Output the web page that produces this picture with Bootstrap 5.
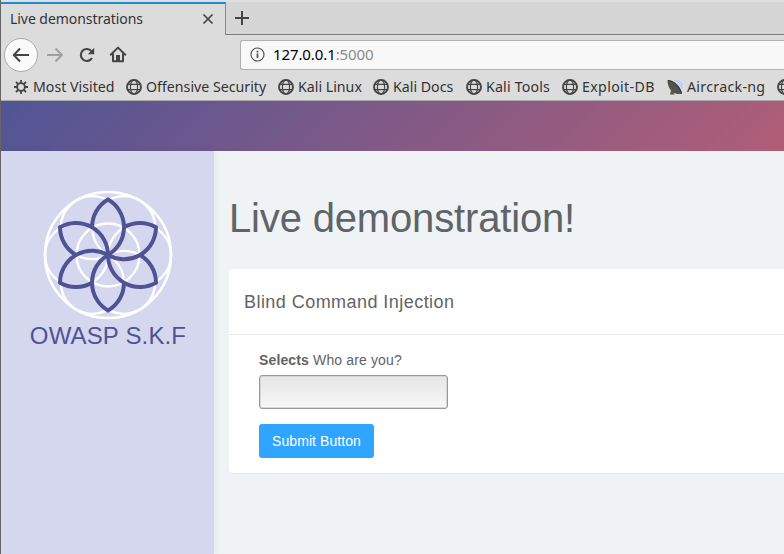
<!DOCTYPE html>
<html lang="en">
<head>
<meta charset="utf-8">
<meta name="viewport" content="width=device-width, initial-scale=1">
<title>Live demonstrations</title>
<link href="https://cdn.jsdelivr.net/npm/bootstrap@5.3.0/dist/css/bootstrap.min.css" rel="stylesheet">
<style>
body{width:784px;height:554px;overflow:hidden;background:#eff3f6;font-family:"Liberation Sans",Arial,sans-serif;color:#616466;font-size:14px;border-left:1px solid #666}
.chrome{height:101px;background:#dcdcdc;border-bottom:1px solid #aaa;font-family:"Noto Sans","Open Sans",sans-serif;color:#333;font-size:14px}
.tabs{height:35px;background:#d6d6d6;border-top:2px solid #e0e0e0}
.tab-on{width:225px;background:#dcdcdc;border-top:2px solid #1c8bcb;border-right:1px solid #888;padding:0 11px 0 9px}
.tab-on span{letter-spacing:-.05px;margin-top:-2px}
.tab-on svg{margin-top:-2px}
.tab-rest{border-bottom:1px solid #7c7c7c;padding-left:8px}
.toolbar{height:39px;padding-left:3px}
.back{width:34px;height:34px;background:#fafafa;border:1px solid #aaa}
.fwd{margin-left:8px}
.tool{margin-left:13.5px}
.address{height:30px;margin-left:113px;background:#f8f8f8;border:1px solid #b0b0b0;border-right:0;border-radius:3px 0 0 3px;padding-left:9px;color:#000;font-size:15px;letter-spacing:-.1px}
.address .port{color:#8a8a8a}
.marks{height:26px;padding-left:12px;font-size:14.2px;line-height:26px}
.mk{height:26px;gap:4px}
.mk span{white-space:nowrap}
.wide{letter-spacing:.3px}
.wider{letter-spacing:.35px}
.page-top{height:50px;background:linear-gradient(135deg,#505596 0,#b15e76 590px,#c85f6b 700px)}
.side{width:213px;height:403px;background:#d5d7ee;padding-top:39px;color:#4f5396;box-shadow:1px 0 8px rgba(0,0,0,.06)}
.brand{font-size:24px;line-height:32px;letter-spacing:.15px;padding-left:1px}
.main{padding:43px 0 0 15px;min-width:0}
.main h1{font-size:40px;line-height:48px;margin-bottom:27px;font-weight:400;letter-spacing:-.16px}
.panel{height:205px;background:#fff;border-bottom:1px solid #e3e6e8;border-radius:4px 0 0 4px}
.panel-title{height:66px;padding:2px 0 0 15px;border-bottom:1px solid #e8ebed;font-size:18px;letter-spacing:.45px}
.panel-form{padding:15px 30px}
.panel-form label{line-height:20px;margin-bottom:5px;letter-spacing:.14px}
.answer{width:189px;height:34px;border:1px solid #999;border-radius:3px;background:linear-gradient(#e6e6e6,#f7f7f7);box-shadow:inset 0 0 0 1px #d5d5d5;margin-bottom:15px}
.send{width:115px;height:34px;background:#30a5ff;border:0;border-radius:3px;color:#fff;font-size:14px;padding:0;letter-spacing:.08px}
</style>
<script src="https://cdn.jsdelivr.net/npm/bootstrap@5.3.0/dist/js/bootstrap.bundle.min.js"></script>
</head>
<body>
<svg width="0" height="0" class="position-absolute" aria-hidden="true">
<symbol id="globe" viewBox="0 0 16 16"><g fill="none" stroke="#444"><circle cx="8" cy="8" r="7" stroke-width="1.9"/><ellipse cx="8" cy="8" rx="3.6" ry="7" stroke-width="1.2"/><path d="M2 5.3h12M2 10.7h12" stroke-width="1.3"/></g></symbol>
</svg>
<header class="chrome">
<div class="tabs d-flex">
<div class="tab-on d-flex align-items-center justify-content-between flex-shrink-0"><span>Live demonstrations</span>
<svg width="12" height="12" viewBox="0 0 12 12"><path d="M1.500 1.500l9 9M10.500 1.500l-9 9" stroke="#444" stroke-width="1.700"/></svg></div>
<div class="tab-rest flex-grow-1"><svg width="16" height="16" viewBox="0 0 16 16" class="mt-2"><path d="M8 1v14M1 8h14" stroke="#444" stroke-width="2"/></svg></div>
</div>
<div class="toolbar d-flex align-items-center">
<span class="back rounded-circle d-flex align-items-center justify-content-center flex-shrink-0"><svg width="18" height="16" viewBox="0 0 18 16"><path d="M17 8H2M8 1.500L1.800 8 8 14.500" fill="none" stroke="#444" stroke-width="2"/></svg></span>
<svg class="flex-shrink-0 fwd" width="18" height="16" viewBox="0 0 18 16"><path d="M1 8h14.500M9.500 1.500L15.800 8l-6.300 6.500" fill="none" stroke="#a0a0a0" stroke-width="2"/></svg>
<svg class="flex-shrink-0 tool" width="18" height="16" viewBox="0 0 18 16"><path d="M13.500 4.200A6 6 0 1 0 14 11" fill="none" stroke="#444" stroke-width="2.100"/><path d="M16.200 .8v6.400H9.800z" fill="#444"/></svg>
<svg class="flex-shrink-0 tool" width="18" height="17" viewBox="0 0 18 17"><path d="M1.200 9.200L9 1.600l7.800 7.600M4 7.500v7.800h10V7.500" fill="none" stroke="#444" stroke-width="2" stroke-linejoin="round"/><path d="M7 9h4v6H7z" fill="#444"/></svg>
<div class="address d-flex align-items-center flex-grow-1"><svg width="15" height="15" viewBox="0 0 15 15" class="me-2"><circle cx="7.500" cy="7.500" r="6.500" fill="none" stroke="#555" stroke-width="1.200"/><path d="M7.500 6.500v4.500M7.500 3.700v1.700" stroke="#555" stroke-width="1.800"/></svg><span>127.0.0.1<span class="port">:5000</span></span></div>
</div>
<nav class="marks d-flex overflow-hidden">
<div class="mk d-flex align-items-center flex-shrink-0" style="width:113px"><svg width="16" height="16" viewBox="0 0 16 16"><circle cx="8" cy="8" r="3.900" fill="none" stroke="#444" stroke-width="1.900"/><path d="M8 1v3M8 12v3M1 8h3M12 8h3M3 3l2.200 2.200M10.800 10.800L13 13M13 3l-2.200 2.200M5.200 10.800L3 13" stroke="#444" stroke-width="1.800"/></svg><span>Most Visited</span></div>
<div class="mk d-flex align-items-center flex-shrink-0" style="width:152px"><svg width="16" height="16"><use href="#globe"/></svg><span>Offensive Security</span></div>
<div class="mk d-flex align-items-center flex-shrink-0" style="width:95px"><svg width="16" height="16"><use href="#globe"/></svg><span>Kali Linux</span></div>
<div class="mk d-flex align-items-center flex-shrink-0" style="width:93px"><svg width="16" height="16"><use href="#globe"/></svg><span>Kali Docs</span></div>
<div class="mk d-flex align-items-center flex-shrink-0" style="width:96px"><svg width="16" height="16"><use href="#globe"/></svg><span style="letter-spacing:.18px">Kali Tools</span></div>
<div class="mk d-flex align-items-center flex-shrink-0" style="width:105px"><svg width="16" height="16"><use href="#globe"/></svg><span class="wider">Exploit-DB</span></div>
<div class="mk d-flex align-items-center flex-shrink-0" style="width:110px"><svg width="16" height="16" viewBox="0 0 16 16"><path d="M5 .5h10.500v12z" fill="#d3e1f5"/><path d="M7 1c4 1 6.500 4 8 8M11 1c2 1 3.500 3 4.500 5" fill="none" stroke="#a5c0ea"/><path d="M.5 1C7 1 14 7 15 15c-4.500 .5-8.500-.5-11-3.500C1.500 8.500 .5 5 .5 1z" fill="#50544c"/><path d="M1 1.500C7 2 13 8 14.500 14.500" fill="none" stroke="#34372f"/><path d="M4 11.500l-1 4h4.500l-1-2.500z" fill="#5c5344"/></svg><span class="wide">Aircrack-ng</span></div>
<div class="mk d-flex align-items-center flex-shrink-0"><svg width="16" height="16"><use href="#globe"/></svg></div>
</nav>
</header>
<div class="page-top"></div>
<div class="d-flex">
<aside class="side flex-shrink-0 text-center">
<svg class="d-block mx-auto" width="130" height="130" viewBox="-65 -65 130 130">
<defs><path id="petal" d="M-16-27.700A32 32 0 0 1 0-55.400A32 32 0 0 1 0 0"/></defs>
<g fill="none" stroke="#fff" stroke-width="2.300"><circle r="63" stroke-width="2.600"/><circle r="31.500"/><circle cx="31.500" r="31.500"/><circle cx="-31.500" r="31.500"/><circle cx="15.750" cy="-27.300" r="31.500"/><circle cx="-15.750" cy="-27.300" r="31.500"/><circle cx="15.750" cy="27.300" r="31.500"/><circle cx="-15.750" cy="27.300" r="31.500"/></g>
<g fill="none" stroke="#4f5396" stroke-width="4"><use href="#petal"/><use href="#petal" transform="rotate(60)"/><use href="#petal" transform="rotate(120)"/><use href="#petal" transform="rotate(180)"/><use href="#petal" transform="rotate(240)"/><use href="#petal" transform="rotate(300)"/></g>
</svg>
<div class="brand">OWASP S.K.F</div>
</aside>
<main class="main flex-grow-1">
<h1>Live demonstration!</h1>
<section class="panel">
<div class="panel-title d-flex align-items-center">Blind Command Injection</div>
<div class="panel-form d-flex flex-column align-items-start"><label for="who"><strong>Selects</strong> Who are you?</label><input id="who" class="answer" type="text"><button class="btn send" type="button">Submit Button</button></div>
</section>
</main>
</div>
</body>
</html>
